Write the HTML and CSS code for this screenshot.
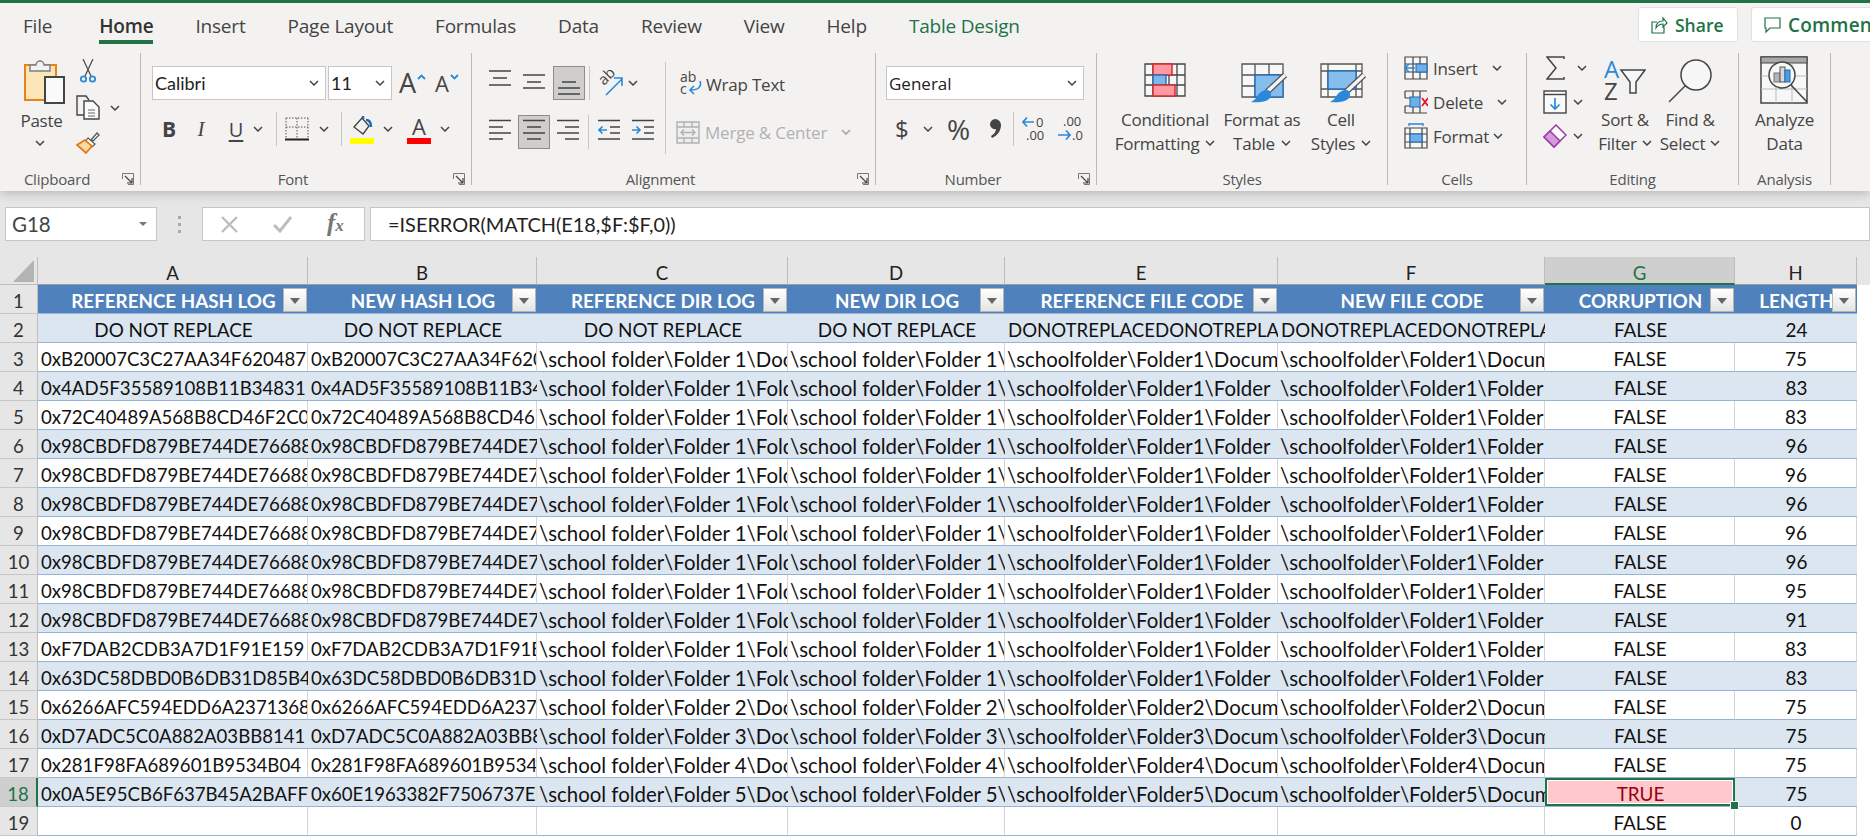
FILE: index.html
```html
<!DOCTYPE html>
<html lang="en">
<head>
<meta charset="utf-8">
<title>Excel</title>
<link rel="stylesheet" href="styles.css">
</head>
<body>
<svg class="defs" width="0" height="0" aria-hidden="true">
  <symbol id="chev" viewBox="0 0 10 6"><path d="M1 1l4 4 4-4" fill="none" stroke="#444" stroke-width="1.5"/></symbol>
  <symbol id="launch" viewBox="0 0 12 12"><path d="M.5 6V.5H11.500V11.500H6" fill="none" stroke="#777"/><path d="M3 3l7 7M10 5v5H5" fill="none" stroke="#444" stroke-width="1.2"/></symbol>
  <symbol id="brushfill" viewBox="0 0 46 40"><path d="M26 29L44 12" stroke="#555" stroke-width="6" fill="none"/><path d="M26 29L44 12" stroke="#f5f5f5" stroke-width="3.500" fill="none"/><path d="M26 27c4 0 5 5 3 8-3 4-12 5-19 4 4-2 5-4 7-7 2-3 5-5 9-5z" fill="#2b88d8"/></symbol>
</svg>

<header class="ribbon">
  <nav class="tabs">
    <div class="tablist">
      <span class="tab tab-file">File</span>
      <span class="tab tab-home">Home</span>
      <span class="tab">Insert</span>
      <span class="tab">Page Layout</span>
      <span class="tab">Formulas</span>
      <span class="tab">Data</span>
      <span class="tab">Review</span>
      <span class="tab">View</span>
      <span class="tab">Help</span>
      <span class="tab tab-design">Table Design</span>
    </div>
    <button class="action action-share">
      <svg width="17" height="18" viewBox="0 0 17 18"><path d="M6 6H1v11h12v-6M5 12c0-5 3-7 7-7V2l4 5-4 4V8c-3 0-5 1-7 4z" fill="none" stroke="#217346" stroke-width="1.200"/></svg>Share
    </button>
    <button class="action action-comments">
      <svg width="17" height="18" viewBox="0 0 17 18"><path d="M1 2h15v10H6l-4 4v-4H1z" fill="none" stroke="#217346" stroke-width="1.200"/></svg>Comments
    </button>
  </nav>

  <div class="groups">
    <section class="group g-clip">
      <div class="body clip-body">
        <div class="paste">
          <svg width="41" height="45" viewBox="0 0 41 45"><rect x="1" y="6" width="31" height="35" fill="#fbe6b8" stroke="#e8831a" stroke-width="2"/><path d="M6 12V6h6a4 4 0 0 1 8 0h6v6z" fill="#f2f2f2" stroke="#7f7f7f" stroke-width="1.500"/><rect x="21" y="18" width="19" height="26" fill="#fafafa" stroke="#444" stroke-width="2"/></svg>
          <span class="big-text paste-text">Paste</span>
          <svg class="chev chev-paste"><use href="#chev"/></svg>
        </div>
        <div class="clip-tools">
          <svg class="ml-4" width="16" height="24" viewBox="0 0 16 24"><path d="M3 0l8 17M13 0L5 17" stroke="#444" stroke-width="1.200" fill="none"/><circle cx="3.500" cy="20" r="2.700" fill="none" stroke="#2b88d8" stroke-width="1.800"/><circle cx="12.500" cy="20" r="2.700" fill="none" stroke="#2b88d8" stroke-width="1.800"/></svg>
          <div class="tool-line">
            <svg width="24" height="25" viewBox="0 0 24 25"><path d="M9 20H1V1h9l3 4" fill="none" stroke="#444" stroke-width="1.400"/><path d="M8 6h9l6 6v12H8z" fill="#fafafa" stroke="#444" stroke-width="1.400"/><path d="M12 15h7M12 18h7M12 21h7" stroke="#666"/></svg>
            <svg class="chev ml-10"><use href="#chev"/></svg>
          </div>
          <svg width="24" height="22" viewBox="0 0 24 22"><path d="M15 8l6-7 2 2-6 6z" fill="#fff" stroke="#555" stroke-width="1.300"/><path d="M12 6l7 6-3 3-7-5z" fill="#fff" stroke="#555" stroke-width="1.200"/><path d="M9 8L1 13l9 8 6-7z" fill="#fbd9a0" stroke="#e0781a" stroke-width="1.700"/></svg>
        </div>
      </div>
      <footer class="label">Clipboard</footer>
      <svg class="launcher"><use href="#launch"/></svg>
    </section>

    <section class="group g-font">
      <div class="body">
        <div class="row">
          <div class="select sel-font"><span>Calibri</span><svg class="chev"><use href="#chev"/></svg></div>
          <div class="select sel-size"><span>11</span><svg class="chev"><use href="#chev"/></svg></div>
          <span class="glyph a-grow">A<svg class="caret" width="9" height="6" viewBox="0 0 9 6"><path d="M1 5l3.500-3.500L8 5" fill="none" stroke="#2b88d8" stroke-width="1.800"/></svg></span>
          <span class="glyph a-shrink">A<svg class="caret" width="9" height="6" viewBox="0 0 9 6"><path d="M1 1l3.500 3.500L8 1" fill="none" stroke="#2b88d8" stroke-width="1.800"/></svg></span>
        </div>
        <div class="row row-second">
          <span class="glyph fmt fmt-b">B</span>
          <span class="glyph fmt fmt-i">I</span>
          <span class="glyph fmt fmt-u">U</span>
          <svg class="chev ml-9"><use href="#chev"/></svg>
          <span class="vsep ml-13"></span>
          <svg class="ml-8" width="24" height="24" viewBox="0 0 24 24"><path d="M1 1h22M1 10h22M1 1v20M12 1v20M23 1v20" stroke="#555" stroke-dasharray="1.500 1.500" fill="none"/><path d="M0 22.500h24" stroke="#222" stroke-width="2"/></svg>
          <svg class="chev ml-10"><use href="#chev"/></svg>
          <span class="vsep ml-12"></span>
          <span class="colorbtn ml-8"><svg width="24" height="22" viewBox="0 0 24 22"><path d="M4 12L12 3l7 8-6 8z" fill="none" stroke="#444" stroke-width="1.400"/><path d="M13 1v3M16 5c3 0 5 2 5 7" fill="none" stroke="#1c6ab5" stroke-width="2.500"/></svg><i class="swatch sw-yellow"></i></span>
          <svg class="chev ml-9"><use href="#chev"/></svg>
          <span class="colorbtn ml-14"><span class="a-color">A</span><i class="swatch sw-red"></i></span>
          <svg class="chev ml-9"><use href="#chev"/></svg>
        </div>
      </div>
      <footer class="label">Font</footer>
      <svg class="launcher"><use href="#launch"/></svg>
    </section>

    <section class="group g-align">
      <div class="body align-body">
        <div class="align-left">
          <div class="row">
            <svg width="22" height="34" viewBox="0 0 22 34"><path d="M0 5h22M4 12h14M0 19h22" stroke="#444" stroke-width="1.400"/></svg>
            <svg class="ml-12" width="22" height="34" viewBox="0 0 22 34"><path d="M0 9h22M4 16h14M0 22h22" stroke="#444" stroke-width="1.400"/></svg>
            <span class="on ml-8"><svg width="22" height="34" viewBox="0 0 22 34"><path d="M4 16h14M0 22h22M0 28h22" stroke="#444" stroke-width="1.400"/></svg></span>
            <span class="vsep ml-4"></span>
            <svg class="ml-8" width="26" height="26" viewBox="0 0 26 26"><text x="3" y="13" transform="rotate(-45 8 11)" class="svg-ab">ab</text><path d="M8 25L24 9M16 8h8v8" fill="none" stroke="#2b88d8" stroke-width="1.600"/></svg>
            <svg class="chev ml-4"><use href="#chev"/></svg>
          </div>
          <div class="row row-a2">
            <svg width="22" height="34" viewBox="0 0 22 34"><path d="M0 5.500h22M0 12h14M0 18h22M0 24h14" stroke="#444" stroke-width="1.400"/></svg>
            <span class="on ml-7"><svg width="22" height="34" viewBox="0 0 22 34"><path d="M0 5.500h22M4 12h14M0 18h22M4 24h14" stroke="#444" stroke-width="1.400"/></svg></span>
            <svg class="ml-7" width="22" height="34" viewBox="0 0 22 34"><path d="M0 5.500h22M8 12h14M0 18h22M8 24h14" stroke="#444" stroke-width="1.400"/></svg>
            <span class="vsep ml-9"></span>
            <svg class="ml-9" width="22" height="34" viewBox="0 0 22 34"><path d="M0 5.500h22M12 12h10M12 18h10M0 24h22" stroke="#444" stroke-width="1.400"/><path d="M9 15H1M4.500 11.500L1 15l3.500 3.500" fill="none" stroke="#2b88d8" stroke-width="1.600"/></svg>
            <svg class="ml-12" width="22" height="34" viewBox="0 0 22 34"><path d="M0 5.500h22M12 12h10M12 18h10M0 24h22" stroke="#444" stroke-width="1.400"/><path d="M0 15h8M4.500 11.500L8 15l-3.500 3.500" fill="none" stroke="#2b88d8" stroke-width="1.600"/></svg>
          </div>
        </div>
        <div class="align-right">
          <div class="row">
            <svg width="22" height="28" viewBox="0 0 22 28"><text x="0" y="12" class="svg-small">ab</text><text x="0" y="24" class="svg-small">c</text><path d="M20 11c2 6-2 9-9 9M14 16l-4 4 4 4" fill="none" stroke="#2b88d8" stroke-width="1.600"/></svg>
            <span class="tool-text ml-4">Wrap Text</span>
          </div>
          <div class="row row-merge">
            <svg width="24" height="23" viewBox="0 0 24 23"><path d="M1 1h22v21H1zM1 6h22M1 17h22M8 1v5M16 1v5M8 17v5M16 17v5" fill="#eee" stroke="#b1b1b1" stroke-width="1.400"/><path d="M5 11.500h14M8 8.500l-3 3 3 3M16 8.500l3 3-3 3" fill="none" stroke="#b1b1b1" stroke-width="1.300"/></svg>
            <span class="tool-text disabled ml-5">Merge &amp; Center</span>
            <svg class="chev chev-off"><use href="#chev"/></svg>
          </div>
        </div>
      </div>
      <footer class="label">Alignment</footer>
      <svg class="launcher"><use href="#launch"/></svg>
    </section>

    <section class="group g-num">
      <div class="body">
        <div class="row">
          <div class="select sel-gen"><span>General</span><svg class="chev"><use href="#chev"/></svg></div>
        </div>
        <div class="row row-second row-n2">
          <span class="glyph num-d">$</span>
          <svg class="chev ml-14"><use href="#chev"/></svg>
          <span class="glyph num-p">%</span>
          <svg class="num-c" width="12" height="20" viewBox="0 0 12 20"><path d="M6 0a6 6 0 0 1 6 6c0 6-4 11-9 13l-1-2c3-2 5-4 5-7a5 5 0 0 1-6-4 6 6 0 0 1 5-6z" fill="#444"/></svg>
          <span class="vsep ml-12"></span>
          <svg class="ml-8" width="26" height="30" viewBox="0 0 26 30"><path d="M12 8H1M5 3.500L1 8l4 4.500" fill="none" stroke="#2b88d8" stroke-width="1.700"/><text x="14" y="13" class="svg-dec">0</text><text x="4" y="26" class="svg-dec">.00</text></svg>
          <svg class="ml-9" width="26" height="30" viewBox="0 0 26 30"><text x="6" y="12" class="svg-dec">.00</text><path d="M1 21h12M9 16.500l4 4.500-4 4.500" fill="none" stroke="#2b88d8" stroke-width="1.700"/><text x="15" y="26" class="svg-dec">.0</text></svg>
        </div>
      </div>
      <footer class="label">Number</footer>
      <svg class="launcher"><use href="#launch"/></svg>
    </section>

    <section class="group g-styles">
      <div class="body big-body styles-body">
        <div class="big w-cond">
          <span class="slot"><svg width="42" height="34" viewBox="0 0 42 34"><path d="M1 1h40v32H1zM1 12h40M1 22h40M9 1v32M25 1v32M33 1v32" fill="#f7f7f7" stroke="#444" stroke-width="1.300"/><rect x="9" y="1" width="19" height="11" fill="#ff9aa2" stroke="#d92a2a" stroke-width="1.500"/><rect x="9" y="12" width="13" height="10" fill="#7db8ea" stroke="#1c6ab5" stroke-width="1.300"/><rect x="9" y="22" width="22" height="11" fill="#ff9aa2" stroke="#d92a2a" stroke-width="1.500"/></svg></span>
          <span class="big-text">Conditional</span>
          <span class="big-text">Formatting<svg class="chev ml-6"><use href="#chev"/></svg></span>
        </div>
        <div class="big w-fmt">
          <span class="slot slot-shift"><svg width="46" height="40" viewBox="0 0 46 40"><path d="M1 1h41v33H1zM1 12h41M1 23h41M14 1v33M28 1v33" fill="#f7f7f7" stroke="#555" stroke-width="1.300"/><rect x="14" y="12" width="28" height="22" fill="#85bdec" stroke="#1c6ab5" stroke-width="1.300"/><use href="#brushfill"/></svg></span>
          <span class="big-text">Format as</span>
          <span class="big-text">Table<svg class="chev ml-6"><use href="#chev"/></svg></span>
        </div>
        <div class="big w-cell">
          <span class="slot slot-shift"><svg width="46" height="40" viewBox="0 0 46 40"><path d="M1 1h41v33H1zM8 1v33M36 1v33M1 8h41M1 26h41" fill="#f7f7f7" stroke="#555" stroke-width="1.300"/><rect x="8" y="8" width="28" height="18" fill="#85bdec" stroke="#1c6ab5" stroke-width="1.300"/><use href="#brushfill"/></svg></span>
          <span class="big-text">Cell</span>
          <span class="big-text">Styles<svg class="chev ml-6"><use href="#chev"/></svg></span>
        </div>
      </div>
      <footer class="label">Styles</footer>
    </section>

    <section class="group g-cells">
      <div class="body cells-body">
        <div class="cell-line">
          <svg width="24" height="24" viewBox="0 0 24 24"><path d="M1 1h22v22H1zM1 8h22M1 16h22M9 1v22M16 1v22" fill="#f7f7f7" stroke="#444" stroke-width="1.200"/><rect x="12" y="8" width="11" height="8" fill="#6fb0e8" stroke="#1c6ab5"/><path d="M11 12H1M5 8l-4 4 4 4" fill="none" stroke="#2b88d8" stroke-width="1.700"/></svg>
          <span class="tool-text w-ins">Insert</span><svg class="chev"><use href="#chev"/></svg>
        </div>
        <div class="cell-line">
          <svg width="24" height="24" viewBox="0 0 24 24"><path d="M1 1h22M1 8h7M1 16h7M1 23h22M1 1v7M1 16v7M9 1v7M16 1v7M9 16v7M16 16v7" fill="none" stroke="#444" stroke-width="1.200"/><rect x="6" y="7" width="10" height="10" fill="#6fb0e8" stroke="#1c6ab5"/><path d="M18 8l6 8M24 8l-6 8" stroke="#e81123" stroke-width="1.700"/></svg>
          <span class="tool-text w-del">Delete</span><svg class="chev"><use href="#chev"/></svg>
        </div>
        <div class="cell-line">
          <svg width="24" height="26" viewBox="0 0 24 26"><path d="M1 5h22v20H1zM1 11h22M1 19h22M6 5v20M18 5v20" fill="#f7f7f7" stroke="#444" stroke-width="1.200"/><rect x="6" y="11" width="12" height="8" fill="#6fb0e8" stroke="#1c6ab5"/><path d="M5 1h14M5 0v3M19 0v3" stroke="#2b88d8" stroke-width="1.300"/></svg>
          <span class="tool-text w-form">Format</span><svg class="chev"><use href="#chev"/></svg>
        </div>
      </div>
      <footer class="label">Cells</footer>
    </section>

    <section class="group g-edit">
      <div class="body edit-body">
        <div class="edit-small">
          <div class="edit-line">
            <svg class="ml-3" width="19" height="24" viewBox="0 0 19 24"><path d="M18 3V1H1l9 11-9 11h17v-2" fill="none" stroke="#444" stroke-width="1.500"/></svg>
            <svg class="chev ml-12"><use href="#chev"/></svg>
          </div>
          <div class="edit-line">
            <svg width="24" height="24" viewBox="0 0 24 24"><rect x="1" y="1" width="22" height="22" fill="#fafafa" stroke="#444" stroke-width="1.400"/><path d="M1 4.500h22" stroke="#444" stroke-width="1.400"/><path d="M12 8v11M7.500 14.500L12 19l4.500-4.500" fill="none" stroke="#2b88d8" stroke-width="1.700"/></svg>
            <svg class="chev ml-6"><use href="#chev"/></svg>
          </div>
          <div class="edit-line">
            <svg width="24" height="24" viewBox="0 0 24 24"><path d="M1 13L13 1l10 10-12 12z" fill="#fafafa" stroke="#9c3aa8" stroke-width="1.500"/><path d="M1 13l6-6 10 10-6 6z" fill="#d59ad8" stroke="#9c3aa8" stroke-width="1.500"/></svg>
            <svg class="chev ml-6"><use href="#chev"/></svg>
          </div>
        </div>
        <div class="big w-sort">
          <span class="slot slot-edit"><svg width="42" height="42" viewBox="0 0 42 42"><text x="0" y="19" class="svg-az blue">A</text><text x="0" y="41" class="svg-az">Z</text><path d="M17 11h24L32 23v11h-6V23z" fill="#f7f7f7" stroke="#444" stroke-width="1.500"/></svg></span>
          <span class="big-text">Sort &amp;</span>
          <span class="big-text">Filter<svg class="chev ml-5"><use href="#chev"/></svg></span>
        </div>
        <div class="big w-find">
          <span class="slot slot-edit"><svg width="44" height="44" viewBox="0 0 44 44"><circle cx="28" cy="16" r="15" fill="#f7f7f7" stroke="#444" stroke-width="1.500"/><path d="M17 27L1 43" stroke="#444" stroke-width="1.500"/></svg></span>
          <span class="big-text">Find &amp;</span>
          <span class="big-text">Select<svg class="chev ml-5"><use href="#chev"/></svg></span>
        </div>
      </div>
      <footer class="label">Editing</footer>
    </section>

    <section class="group g-an">
      <div class="body big-body an-body">
        <div class="big w-an">
          <span class="slot slot-an"><svg width="48" height="48" viewBox="0 0 48 48"><rect x="1" y="1" width="46" height="46" fill="#f7f7f7" stroke="#444" stroke-width="1.500"/><rect x="1" y="1" width="46" height="6" fill="#a8a8a8" stroke="#444"/><path d="M1 20h46M1 33h46M16 7v40M32 7v40" stroke="#bbb"/><circle cx="22" cy="19" r="13" fill="#f7f7f7" stroke="#444" stroke-width="1.500"/><rect x="14" y="17" width="6" height="9" fill="#b5b5b5" stroke="#777"/><rect x="20" y="11" width="5" height="15" fill="#d8d8d8" stroke="#555"/><rect x="25" y="14" width="5" height="12" fill="#4a9fe6" stroke="#1c6ab5"/><path d="M31 29l16 17" stroke="#444" stroke-width="1.600"/></svg></span>
          <span class="big-text">Analyze</span>
          <span class="big-text">Data</span>
        </div>
      </div>
      <footer class="label label-full">Analysis</footer>
    </section>
  </div>
</header>

<div class="formula-bar">
  <div class="namebox"><span>G18</span><i class="tri"></i></div>
  <div class="dots"><i></i><i></i><i></i></div>
  <div class="fxbox">
    <svg width="19" height="17" viewBox="0 0 19 17"><path d="M2 1l15 15M17 1L2 16" stroke="#bdbdbd" stroke-width="2.400"/></svg>
    <svg width="20" height="17" viewBox="0 0 20 17"><path d="M1 9l6 6L18 1" fill="none" stroke="#bdbdbd" stroke-width="3"/></svg>
    <span class="fx">f<sub>x</sub></span>
  </div>
  <div class="formula">=ISERROR(MATCH(E18,$F:$F,0))</div>
</div>

<main class="sheet">
  <div class="corner"><svg width="21" height="22" viewBox="0 0 21 22"><path d="M21 0v22H0z" fill="#b4b4b4"/></svg></div>
  <div class="ch">A</div><div class="ch">B</div><div class="ch">C</div><div class="ch">D</div><div class="ch">E</div><div class="ch">F</div><div class="ch ch-on">G</div><div class="ch">H</div><div class="ch-end"></div>

  <div class="row-s head"><div class="rh">1</div>
    <div class="c">REFERENCE HASH LOG<i class="fb"></i></div><div class="c">NEW HASH LOG<i class="fb"></i></div><div class="c">REFERENCE DIR LOG<i class="fb"></i></div><div class="c">NEW DIR LOG<i class="fb"></i></div><div class="c">REFERENCE FILE CODE<i class="fb"></i></div><div class="c">NEW FILE CODE<i class="fb"></i></div><div class="c">CORRUPTION<i class="fb"></i></div><div class="c"><span class="len">LENGTH</span><i class="fb"></i></div></div>
  <div class="row-s band"><div class="rh">2</div><div class="c mid">DO NOT REPLACE</div><div class="c mid">DO NOT REPLACE</div><div class="c mid">DO NOT REPLACE</div><div class="c mid">DO NOT REPLACE</div><div class="c caps">DONOTREPLACEDONOTREPLACE</div><div class="c caps">DONOTREPLACEDONOTREPLACE</div><div class="c mid">FALSE</div><div class="c mid">24</div></div>
  <div class="row-s"><div class="rh">3</div><div class="c">0xB20007C3C27AA34F6204877</div><div class="c">0xB20007C3C27AA34F62048</div><div class="c">\school folder\Folder 1\Document</div><div class="c">\school folder\Folder 1\Document</div><div class="c">\schoolfolder\Folder1\Document</div><div class="c">\schoolfolder\Folder1\Document</div><div class="c mid">FALSE</div><div class="c mid">75</div></div>
  <div class="row-s band"><div class="rh">4</div><div class="c">0x4AD5F35589108B11B34831</div><div class="c">0x4AD5F35589108B11B3483</div><div class="c">\school folder\Folder 1\Folder</div><div class="c">\school folder\Folder 1\Folder</div><div class="c">\schoolfolder\Folder1\Folder</div><div class="c">\schoolfolder\Folder1\Folder</div><div class="c mid">FALSE</div><div class="c mid">83</div></div>
  <div class="row-s"><div class="rh">5</div><div class="c">0x72C40489A568B8CD46F2C04</div><div class="c">0x72C40489A568B8CD46F2C</div><div class="c">\school folder\Folder 1\Folder</div><div class="c">\school folder\Folder 1\Folder</div><div class="c">\schoolfolder\Folder1\Folder</div><div class="c">\schoolfolder\Folder1\Folder</div><div class="c mid">FALSE</div><div class="c mid">83</div></div>
  <div class="row-s band"><div class="rh">6</div><div class="c">0x98CBDFD879BE744DE766880</div><div class="c">0x98CBDFD879BE744DE7668</div><div class="c">\school folder\Folder 1\Folder</div><div class="c">\school folder\Folder 1\Folder</div><div class="c">\schoolfolder\Folder1\Folder</div><div class="c">\schoolfolder\Folder1\Folder</div><div class="c mid">FALSE</div><div class="c mid">96</div></div>
  <div class="row-s"><div class="rh">7</div><div class="c">0x98CBDFD879BE744DE766880</div><div class="c">0x98CBDFD879BE744DE7668</div><div class="c">\school folder\Folder 1\Folder</div><div class="c">\school folder\Folder 1\Folder</div><div class="c">\schoolfolder\Folder1\Folder</div><div class="c">\schoolfolder\Folder1\Folder</div><div class="c mid">FALSE</div><div class="c mid">96</div></div>
  <div class="row-s band"><div class="rh">8</div><div class="c">0x98CBDFD879BE744DE766880</div><div class="c">0x98CBDFD879BE744DE7668</div><div class="c">\school folder\Folder 1\Folder</div><div class="c">\school folder\Folder 1\Folder</div><div class="c">\schoolfolder\Folder1\Folder</div><div class="c">\schoolfolder\Folder1\Folder</div><div class="c mid">FALSE</div><div class="c mid">96</div></div>
  <div class="row-s"><div class="rh">9</div><div class="c">0x98CBDFD879BE744DE766880</div><div class="c">0x98CBDFD879BE744DE7668</div><div class="c">\school folder\Folder 1\Folder</div><div class="c">\school folder\Folder 1\Folder</div><div class="c">\schoolfolder\Folder1\Folder</div><div class="c">\schoolfolder\Folder1\Folder</div><div class="c mid">FALSE</div><div class="c mid">96</div></div>
  <div class="row-s band"><div class="rh">10</div><div class="c">0x98CBDFD879BE744DE766880</div><div class="c">0x98CBDFD879BE744DE7668</div><div class="c">\school folder\Folder 1\Folder</div><div class="c">\school folder\Folder 1\Folder</div><div class="c">\schoolfolder\Folder1\Folder</div><div class="c">\schoolfolder\Folder1\Folder</div><div class="c mid">FALSE</div><div class="c mid">96</div></div>
  <div class="row-s"><div class="rh">11</div><div class="c">0x98CBDFD879BE744DE766880</div><div class="c">0x98CBDFD879BE744DE7668</div><div class="c">\school folder\Folder 1\Folder</div><div class="c">\school folder\Folder 1\Folder</div><div class="c">\schoolfolder\Folder1\Folder</div><div class="c">\schoolfolder\Folder1\Folder</div><div class="c mid">FALSE</div><div class="c mid">95</div></div>
  <div class="row-s band"><div class="rh">12</div><div class="c">0x98CBDFD879BE744DE766880</div><div class="c">0x98CBDFD879BE744DE7668</div><div class="c">\school folder\Folder 1\Folder</div><div class="c">\school folder\Folder 1\Folder</div><div class="c">\schoolfolder\Folder1\Folder</div><div class="c">\schoolfolder\Folder1\Folder</div><div class="c mid">FALSE</div><div class="c mid">91</div></div>
  <div class="row-s"><div class="rh">13</div><div class="c">0xF7DAB2CDB3A7D1F91E159</div><div class="c">0xF7DAB2CDB3A7D1F91E159</div><div class="c">\school folder\Folder 1\Folder</div><div class="c">\school folder\Folder 1\Folder</div><div class="c">\schoolfolder\Folder1\Folder</div><div class="c">\schoolfolder\Folder1\Folder</div><div class="c mid">FALSE</div><div class="c mid">83</div></div>
  <div class="row-s band"><div class="rh">14</div><div class="c">0x63DC58DBD0B6DB31D85B4A</div><div class="c">0x63DC58DBD0B6DB31D85B4</div><div class="c">\school folder\Folder 1\Folder</div><div class="c">\school folder\Folder 1\Folder</div><div class="c">\schoolfolder\Folder1\Folder</div><div class="c">\schoolfolder\Folder1\Folder</div><div class="c mid">FALSE</div><div class="c mid">83</div></div>
  <div class="row-s"><div class="rh">15</div><div class="c">0x6266AFC594EDD6A23713688</div><div class="c">0x6266AFC594EDD6A237136</div><div class="c">\school folder\Folder 2\Document</div><div class="c">\school folder\Folder 2\Document</div><div class="c">\schoolfolder\Folder2\Document</div><div class="c">\schoolfolder\Folder2\Document</div><div class="c mid">FALSE</div><div class="c mid">75</div></div>
  <div class="row-s band"><div class="rh">16</div><div class="c">0xD7ADC5C0A882A03BB8141</div><div class="c">0xD7ADC5C0A882A03BB8141</div><div class="c">\school folder\Folder 3\Document</div><div class="c">\school folder\Folder 3\Document</div><div class="c">\schoolfolder\Folder3\Document</div><div class="c">\schoolfolder\Folder3\Document</div><div class="c mid">FALSE</div><div class="c mid">75</div></div>
  <div class="row-s"><div class="rh">17</div><div class="c">0x281F98FA689601B9534B04</div><div class="c">0x281F98FA689601B9534B0</div><div class="c">\school folder\Folder 4\Document</div><div class="c">\school folder\Folder 4\Document</div><div class="c">\schoolfolder\Folder4\Document</div><div class="c">\schoolfolder\Folder4\Document</div><div class="c mid">FALSE</div><div class="c mid">75</div></div>
  <div class="row-s band"><div class="rh rh-on">18</div><div class="c">0x0A5E95CB6F637B45A2BAFF8</div><div class="c">0x60E1963382F7506737EB</div><div class="c">\school folder\Folder 5\Document</div><div class="c">\school folder\Folder 5\Document</div><div class="c">\schoolfolder\Folder5\Document</div><div class="c">\schoolfolder\Folder5\Document</div><div class="c mid active">TRUE<i class="handle"></i></div><div class="c mid">75</div></div>
  <div class="row-s"><div class="rh">19</div><div class="c"></div><div class="c"></div><div class="c"></div><div class="c"></div><div class="c"></div><div class="c"></div><div class="c mid">FALSE</div><div class="c mid">0</div></div>
</main>
</body>
</html>
```

FILE: styles.css
```css
* { box-sizing: border-box; }
html, body { margin: 0; height: 838px; overflow: hidden; }
body { background: #e6e6e6; font-family: "Open Sans", "Liberation Sans", sans-serif; color: #444; position: relative; }
.defs { position: absolute; }
svg { display: block; flex: none; }

.ml-3 { margin-left: 3px; } .ml-4 { margin-left: 4px; } .ml-5 { margin-left: 5px; } .ml-6 { margin-left: 6px; }
.ml-7 { margin-left: 7px; } .ml-8 { margin-left: 8px; } .ml-9 { margin-left: 9px; } .ml-10 { margin-left: 10px; }
.ml-12 { margin-left: 12px; } .ml-13 { margin-left: 13px; } .ml-14 { margin-left: 14px; }

.ribbon { height: 191px; background: #f3f2f1; border-top: 3px solid #217346; box-shadow: 0 2px 10px rgba(0,0,0,.22); position: relative; }
.tabs { height: 47px; display: flex; align-items: flex-start; overflow: hidden; }
.tablist { width: 1638px; flex: none; display: flex; padding-left: 23px; gap: 42px; font-size: 19px; }
.tab { line-height: 46px; height: 41px; white-space: nowrap; letter-spacing: -.2px; }
.tab-file { margin-right: 5px; }
.tab-home { font-weight: 600; color: #333; border-bottom: 4px solid #217346; }
.tab-design { color: #217346; }
.action { height: 35px; margin-top: 4px; padding: 0 0 0 12px; display: flex; align-items: center; gap: 7px; background: #fff; border: 1px solid #e3e1df; border-radius: 3px; font: 600 17.500px "Open Sans", sans-serif; color: #217346; flex: none; }
.action-share { width: 100px; }
.action-comments { margin-left: 13px; width: 150px; font-size: 19px; letter-spacing: .2px; }

.groups { display: flex; height: 132px; margin-top: 3px; }
.group { position: relative; height: 132px; border-right: 1px solid #b9b8b6; display: flex; flex-direction: column; flex: none; }
.g-clip { width: 141px; } .g-font { width: 331px; } .g-align { width: 404px; } .g-num { width: 221px; }
.g-styles { width: 291px; } .g-cells { width: 139px; } .g-edit { width: 212px; } .g-an { width: 92px; }
.body { flex: 1; padding-top: 13px; min-height: 0; }
.label { height: 20px; margin-bottom: -4px; line-height: 20px; font-size: 15px; text-align: center; padding-right: 26px; flex: none; color: #555; letter-spacing: -.2px; }
.g-styles .label, .g-cells .label, .g-edit .label, .label-full { padding-right: 0; }
.launcher { position: absolute; right: 6px; top: 120px; width: 12px; height: 12px; }

.row { display: flex; align-items: center; height: 34px; }
.row-second { margin-top: 12px; }
.chev { width: 10px; height: 6px; }
.vsep { width: 1px; height: 34px; background: #c8c6c4; flex: none; }
.glyph { display: block; flex: none; color: #444; }
.tool-text { font-size: 17px; letter-spacing: -.2px; white-space: nowrap; }
.disabled { color: #b1b1b1; }
.big-text { display: flex; align-items: center; height: 24px; font-size: 17px; white-space: nowrap; letter-spacing: -.25px; }

/* clipboard */
.clip-body { display: flex; padding-top: 6px; }
.paste { width: 65px; padding-left: 24px; display: flex; flex-direction: column; align-items: flex-start; }
.paste-text { margin: 4px 0 0 -11px; width: 57px; justify-content: center; }
.chev-paste { margin: 8px 0 0 11px; }
.clip-tools { margin-left: 11px; display: flex; flex-direction: column; gap: 12px; }
.tool-line { display: flex; align-items: center; }

/* selects */
.select { display: flex; align-items: center; justify-content: space-between; height: 34px; background: #fff; border: 1px solid #c6c6c6; padding: 0 6px 0 2px; font-size: 17px; color: #222; flex: none; }
.sel-font { width: 174px; margin-left: 11px; font-family: Lato, sans-serif; font-size: 18px; }
.sel-size { width: 64px; margin-left: 2px; font-family: Lato, sans-serif; font-size: 18px; }
.sel-gen { width: 198px; margin-left: 10px; }
.a-grow, .a-shrink { display: flex; align-items: flex-start; line-height: 30px; }
.a-grow { font-size: 27px; margin-left: 7px; width: 33px; }
.a-shrink { font-size: 22px; margin-left: 3px; }
.caret { margin-top: 6px; margin-left: 1px; }
.fmt { width: 16px; text-align: center; }
.fmt-b { font-size: 21px; font-weight: 700; margin-left: 20px; }
.fmt-i { font: italic 21px "Liberation Serif", serif; margin-left: 16px; }
.fmt-u { font-size: 20px; text-decoration: underline; text-underline-offset: 3px; margin-left: 19px; }
.colorbtn { display: block; width: 24px; flex: none; }
.swatch { display: block; height: 6px; margin-top: 1px; }
.sw-yellow { background: #ffff00; }
.sw-red { background: #ff0000; }
.a-color { display: block; font-size: 22px; line-height: 22px; text-align: center; }

/* alignment */
.align-body { display: flex; padding-top: 13px; align-items: flex-start; }
.align-left { width: 193px; padding-left: 17px; }
.row-a2 { margin-top: 15px; }
.on { display: block; flex: none; width: 32px; height: 34px; background: #cfcecc; border: 1px solid #8c8c8c; padding-left: 4px; }
.on svg { margin-top: -1px; }
.align-right { margin-top: -4px; border-left: 1px solid #c8c6c4; height: 92px; padding: 5px 0 0 14px; width: 200px; display: flex; flex-direction: column; gap: 14px; }
.row-merge { margin-left: -4px; }
.chev-off { margin-left: 14px; opacity: .45; }
.svg-ab { font: 15px "Open Sans", sans-serif; fill: #444; }
.svg-small { font: 14px "Open Sans", sans-serif; fill: #444; }
.svg-dec { font: 13px "Open Sans", sans-serif; fill: #444; }

/* number */
.row-n2 { padding-left: 19px; }
.num-d { font-size: 24px; line-height: 34px; width: 14px; }
.num-p { font-size: 28px; line-height: 34px; margin-left: 14px; width: 24px; }
.num-c { margin-left: 18px; }

/* big */
.big { display: flex; flex-direction: column; align-items: center; flex: none; }
.slot { height: 44px; display: block; }
.slot-shift { margin-left: 4px; }
.big-body { display: flex; padding-top: 10px; }
.styles-body { padding-left: 18px; }
.w-cond { width: 100px; } .w-fmt { width: 98px; margin-left: -2px; } .w-cell { width: 72px; margin-left: -6px; }
.cells-body { padding-top: 3px; padding-left: 16px; display: flex; flex-direction: column; gap: 10px; }
.cell-line { display: flex; align-items: center; height: 24px; }
.w-ins { margin-left: 5px; width: 59px; } .w-del { margin-left: 5px; width: 64px; } .w-form { margin-left: 5px; width: 60px; }
.edit-body { display: flex; padding-top: 3px; padding-left: 16px; }
.edit-small { width: 52px; display: flex; flex-direction: column; gap: 10px; flex: none; }
.edit-line { display: flex; align-items: center; height: 24px; }
.w-sort { width: 64px; margin-left: -2px; padding-top: 3px; } .w-find { width: 66px; padding-top: 3px; }
.slot-edit { height: 48px; }
.svg-az { font: 24px "Open Sans", sans-serif; fill: #444; }
.svg-az.blue { fill: #2b88d8; }
.an-body { padding-top: 3px; padding-left: 0; justify-content: center; }
.slot-an { height: 51px; }

/* formula bar */
.formula-bar { display: flex; height: 34px; margin-top: 16px; padding-left: 5px; align-items: stretch; color: #444; }
.namebox { width: 152px; background: #fff; border: 1px solid #c6c6c6; display: flex; align-items: center; justify-content: space-between; padding: 0 9px 0 6px; font: 20.500px Lato, sans-serif; }
.tri { width: 0; height: 0; border: 4px solid transparent; border-top: 4px solid #777; border-bottom: 0; }
.dots { width: 45px; display: flex; flex-direction: column; align-items: center; justify-content: center; gap: 4px; }
.dots i { width: 3px; height: 3px; background: #aaa; }
.fxbox { width: 163px; background: #fff; border: 1px solid #c6c6c6; display: flex; align-items: center; padding-left: 17px; gap: 34px; }
.fx { font: italic 700 25px/32px "Liberation Serif", serif; color: #777; }
.fx sub { font-size: 17px; vertical-align: baseline; }
.formula { flex: 1; margin-left: 5px; background: #fff; border: 1px solid #c6c6c6; padding-left: 17px; font: 19.900px/32px Lato, sans-serif; color: #222; }

/* sheet */
.sheet { display: grid; grid-template-columns: 38px 270px 229px 251px 217px 273px 267px 190px 122px 1fr; grid-template-rows: 28px; grid-auto-rows: 29px; align-content: start; margin-top: 16px; background: #fff; font: 18.600px/30px Lato, sans-serif; color: #111; height: 581px; }
.corner { background: #e6e6e6; border-right: 1px solid #bdbdbd; border-bottom: 1px solid #bdbdbd; display: flex; justify-content: flex-end; padding: 3px 3px 0 0; }
.ch { background: #e6e6e6; text-align: center; border-right: 1px solid #bdbdbd; border-bottom: 1px solid #9b9b9b; color: #222; line-height: 32px; }
.ch-on { background: #cfcfcf; color: #217346; border-bottom: 2px solid #217346; }
.ch-end { background: #e6e6e6; }
.row-s { display: contents; }
.rh { grid-column: 1; background: #e6e6e6; text-align: center; border-right: 1px solid #bdbdbd; border-bottom: 1px solid #c6c6c6; color: #333; padding-top: 1px; }
.rh-on { background: #cfcfcf; color: #217346; border-right: 2px solid #217346; }
.c { overflow: hidden; white-space: nowrap; padding: 1px 2px 0 3px; border-bottom: 1px solid #95b3d7; border-right: 1px solid #d4d4d4; position: relative; }
.row-s:not(.head) .c:nth-child(n+4):nth-child(-n+7):not(.mid):not(.caps) { font-size: 20.400px; padding-left: 2px; }
.band .c { background: #dce6f1; border-right: 0; }
.mid { text-align: center; font-size: 18.900px; }
.head .c { background: #4f81bd; color: #fff; font-weight: 700; font-size: 18.800px; text-align: center; border-right: 0; }
.len { display: block; text-align: center; }
.fb { position: absolute; right: 1px; top: 3px; width: 24px; height: 24px; background: linear-gradient(#fff, #e4e4e4); border: 1px solid #b5b5b5; }
.fb::after { content: ""; position: absolute; left: 6px; top: 9px; border: 5px solid transparent; border-top: 6px solid #666; border-bottom: 0; }
.band .c.active { background: #ffc7ce; color: #9c0006; overflow: visible; box-shadow: inset 0 0 0 2px #217346, inset 0 0 0 3px #fff; }
.handle { position: absolute; right: -3px; bottom: -3px; width: 7px; height: 7px; background: #217346; outline: 1px solid #fff; z-index: 2; }
```
